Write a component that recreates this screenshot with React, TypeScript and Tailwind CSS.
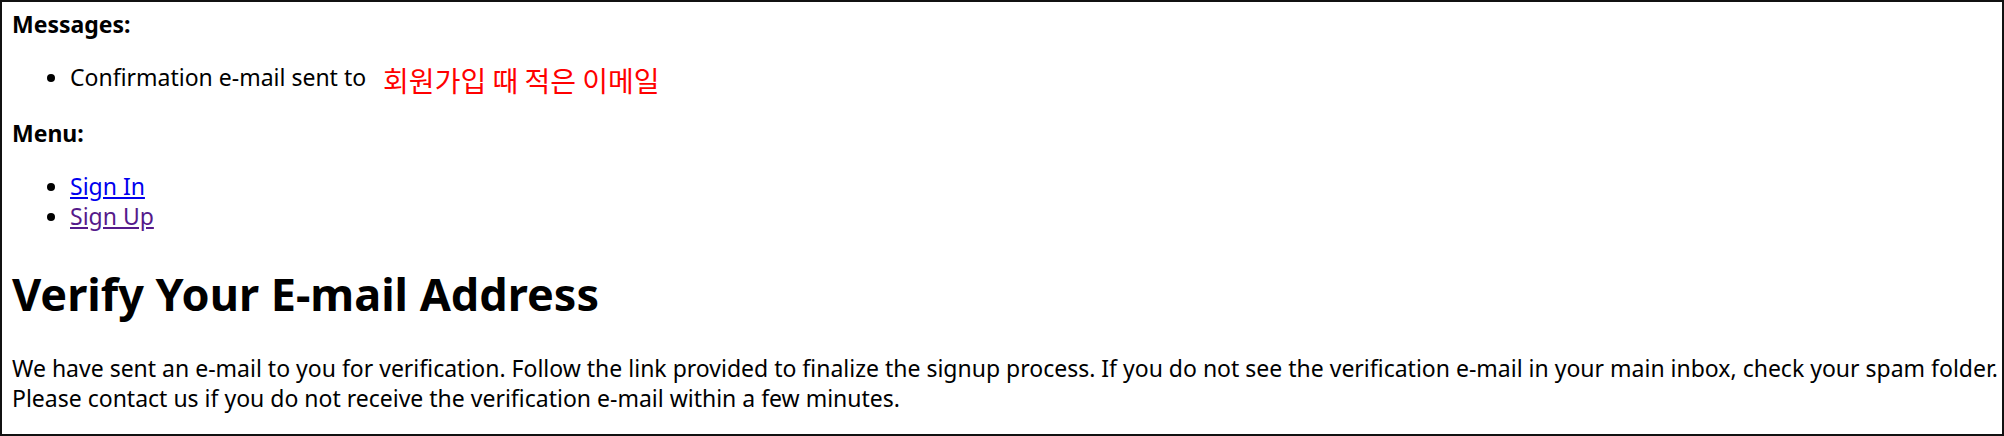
export default function App() {
  return (
    <div
      className="w-[2004px] h-[436px] border-2 border-[#111] bg-white text-black pl-[10px] pt-[7px] overflow-hidden"
      style={{ fontFamily: '"Noto Sans", "Noto Sans CJK KR", sans-serif' }}
    >
      <div className="text-[23px] leading-[30px]">
        <p className="font-bold">Messages:</p>
        <ul className="list-disc pl-[58px] mt-[23px]">
          <li>
            Confirmation e-mail sent to
            <span
              className="ml-[17px] text-[28px] text-[#ff0000] align-middle"
              style={{ fontFamily: '"Noto Sans CJK KR", sans-serif' }}
            >
              회원가입 때 적은 이메일
            </span>
          </li>
        </ul>
        <p className="font-bold mt-[23px]">Menu:</p>
        <ul className="list-disc pl-[58px] mt-[23px]">
          <li>
            <a href="#" className="text-[#0000ee] underline">
              Sign In
            </a>
          </li>
          <li>
            <a href="#" className="text-[#551a8b] underline">
              Sign Up
            </a>
          </li>
        </ul>
        <h1 className="text-[45px] leading-[61px] font-bold mt-[32px]">Verify Your E-mail Address</h1>
        <p className="mt-[29px]">
          We have sent an e-mail to you for verification. Follow the link provided to finalize the signup process. If
          you do not see the verification e-mail in your main inbox, check your spam folder.
          <br />
          Please contact us if you do not receive the verification e-mail within a few minutes.
        </p>
      </div>
    </div>
  )
}
